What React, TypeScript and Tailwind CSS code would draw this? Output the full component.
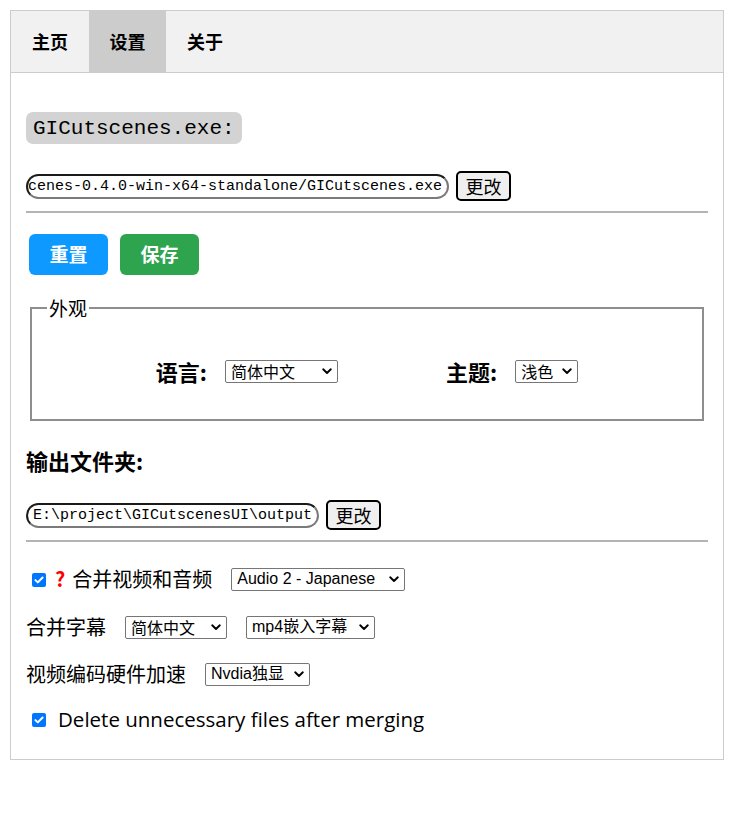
import React from "react";

const CJK = '"Noto Sans CJK SC", "Liberation Sans", sans-serif';
const MONO = '"Liberation Mono", "Noto Sans CJK SC", monospace';

function Chevron() {
  return (
    <svg width="10" height="7" viewBox="0 0 10 7" className="shrink-0">
      <path d="M1.2 1.3 L5 5 L8.8 1.3" fill="none" stroke="#000" strokeWidth="1.9" strokeLinecap="round" strokeLinejoin="round" />
    </svg>
  );
}

function Select({ text, w, latin }: { text: string; w: string; latin?: boolean }) {
  return (
    <div
      className={`${w} h-[23px] border border-[#767676] rounded-[2px] bg-white flex items-center justify-between pl-[5px] pr-[5px] text-[16px] leading-none text-black`}
      style={{ fontFamily: latin ? '"Liberation Sans", "Noto Sans CJK SC", sans-serif' : CJK }}
    >
      <span className="whitespace-nowrap">{text}</span>
      <Chevron />
    </div>
  );
}

function Checkbox() {
  return (
    <span className="inline-flex w-[14px] h-[14px] rounded-[2px] bg-[#0075ff] items-center justify-center shrink-0">
      <svg width="12" height="12" viewBox="0 0 12 12">
        <path d="M2.4 6.1 L4.8 8.4 L9.6 3.5" fill="none" stroke="#fff" strokeWidth="2" strokeLinecap="round" strokeLinejoin="round" />
      </svg>
    </span>
  );
}

function PathInput({ text, w }: { text: string; w: string }) {
  return (
    <div
      className={`${w} h-[25px] rounded-full border-2 border-t-[#1a1a1a] border-l-[#1a1a1a] border-b-[#7a7a7a] border-r-[#7a7a7a] overflow-hidden flex items-center justify-end pl-[5px] pr-[5px] bg-white`}
    >
      <span className="whitespace-nowrap text-[15px] leading-none text-black" style={{ fontFamily: MONO }}>
        {text}
      </span>
    </div>
  );
}

function ChangeBtn() {
  return (
    <div
      className="w-[55px] h-[30px] border-2 border-black rounded-[5px] bg-[#efefef] flex items-center justify-center text-[18px] leading-none text-black"
      style={{ fontFamily: CJK }}
    >
      更改
    </div>
  );
}

export default function App() {
  return (
    <div className="w-[730px] h-[828px] bg-white pt-[10px] pl-[10px]" style={{ fontFamily: CJK }}>
      <div className="w-[714px] h-[750px] border border-[#cccccc]">
        {/* tabs */}
        <div className="h-[62px] bg-[#f1f1f1] border-b border-[#cccccc] flex">
          <div className="w-[78px] h-full flex items-center justify-center text-[18px] font-bold text-black">主页</div>
          <div className="w-[77px] h-full flex items-center justify-center text-[18px] font-bold text-black bg-[#cccccc]">设置</div>
          <div className="w-[78px] h-full flex items-center justify-center text-[18px] font-bold text-black">关于</div>
        </div>

        <div className="pl-[15px] pr-[15px]">
          {/* exe label */}
          <div className="mt-[39px] inline-flex h-[32px] items-center px-[7px] bg-[#d3d3d3] rounded-[7px]">
            <span className="text-[21px] leading-none text-black" style={{ fontFamily: MONO }}>GICutscenes.exe:</span>
          </div>

          <div className="mt-[27px] flex items-center gap-[7px]">
            <PathInput w="w-[423px]" text="GICutscenes-0.4.0-win-x64-standalone/GICutscenes.exe" />
            <ChangeBtn />
          </div>

          <div className="mt-[10px] h-[2px] bg-[#b4b4b4]" />

          {/* buttons */}
          <div className="mt-[21px] flex gap-[12px] pl-[3px]">
            <div className="w-[79px] h-[41px] rounded-[6px] bg-[#0d99ff] flex items-center justify-center text-white text-[19px] font-bold">重置</div>
            <div className="w-[79px] h-[41px] rounded-[6px] bg-[#2ea44f] flex items-center justify-center text-white text-[19px] font-bold">保存</div>
          </div>

          {/* fieldset */}
          <fieldset className="mt-[23px] ml-[4px] mr-[4px] border-2 border-[#8e8e8e] h-[123px]">
            <legend className="ml-[15px] px-[2px] text-[19px] leading-none text-black">外观</legend>
            <div className="h-[100px] flex items-center justify-center gap-[108px] pt-[8px]">
              <div className="flex items-center gap-[18px]">
                <span className="text-[22px] font-bold text-black leading-none">语言:</span>
                <Select text="简体中文" w="w-[113px]" />
              </div>
              <div className="flex items-center gap-[18px]">
                <span className="text-[22px] font-bold text-black leading-none">主题:</span>
                <Select text="浅色" w="w-[63px]" />
              </div>
            </div>
          </fieldset>

          {/* output folder */}
          <div className="mt-[25px] text-[22px] font-bold text-black leading-[28px]">输出文件夹:</div>

          <div className="mt-[26px] flex items-center gap-[7px]">
            <PathInput w="w-[293px]" text="E:\project\GICutscenesUI\output" />
            <ChangeBtn />
          </div>

          <div className="mt-[10px] h-[2px] bg-[#b4b4b4]" />

          {/* options */}
          <div className="mt-[25px] flex items-center h-[24px]">
            <span className="ml-[6px]"><Checkbox /></span>
            <span className="ml-[9px] text-[20px] font-bold text-[#ff0000] leading-none">?</span>
            <span className="ml-[7px] text-[20px] text-black leading-none">合并视频和音频</span>
            <span className="ml-[19px]"><Select text="Audio 2 - Japanese" w="w-[174px]" latin /></span>
          </div>

          <div className="mt-[24px] flex items-center h-[24px]">
            <span className="text-[20px] text-black leading-none">合并字幕</span>
            <span className="ml-[19px]"><Select text="简体中文" w="w-[102px]" /></span>
            <span className="ml-[19px]"><Select text="mp4嵌入字幕" w="w-[129px]" latin /></span>
          </div>

          <div className="mt-[23px] flex items-center h-[24px]">
            <span className="text-[20px] text-black leading-none">视频编码硬件加速</span>
            <span className="ml-[19px]"><Select text="Nvdia独显" w="w-[105px]" latin /></span>
          </div>

          <div className="mt-[21px] flex items-center h-[24px]">
            <span className="ml-[6px]"><Checkbox /></span>
            <span className="ml-[12px] text-[20.5px] text-black leading-none" style={{ fontFamily: '"Open Sans", "Noto Sans", sans-serif' }}>
              Delete unnecessary files after merging
            </span>
          </div>
        </div>
      </div>
    </div>
  );
}
